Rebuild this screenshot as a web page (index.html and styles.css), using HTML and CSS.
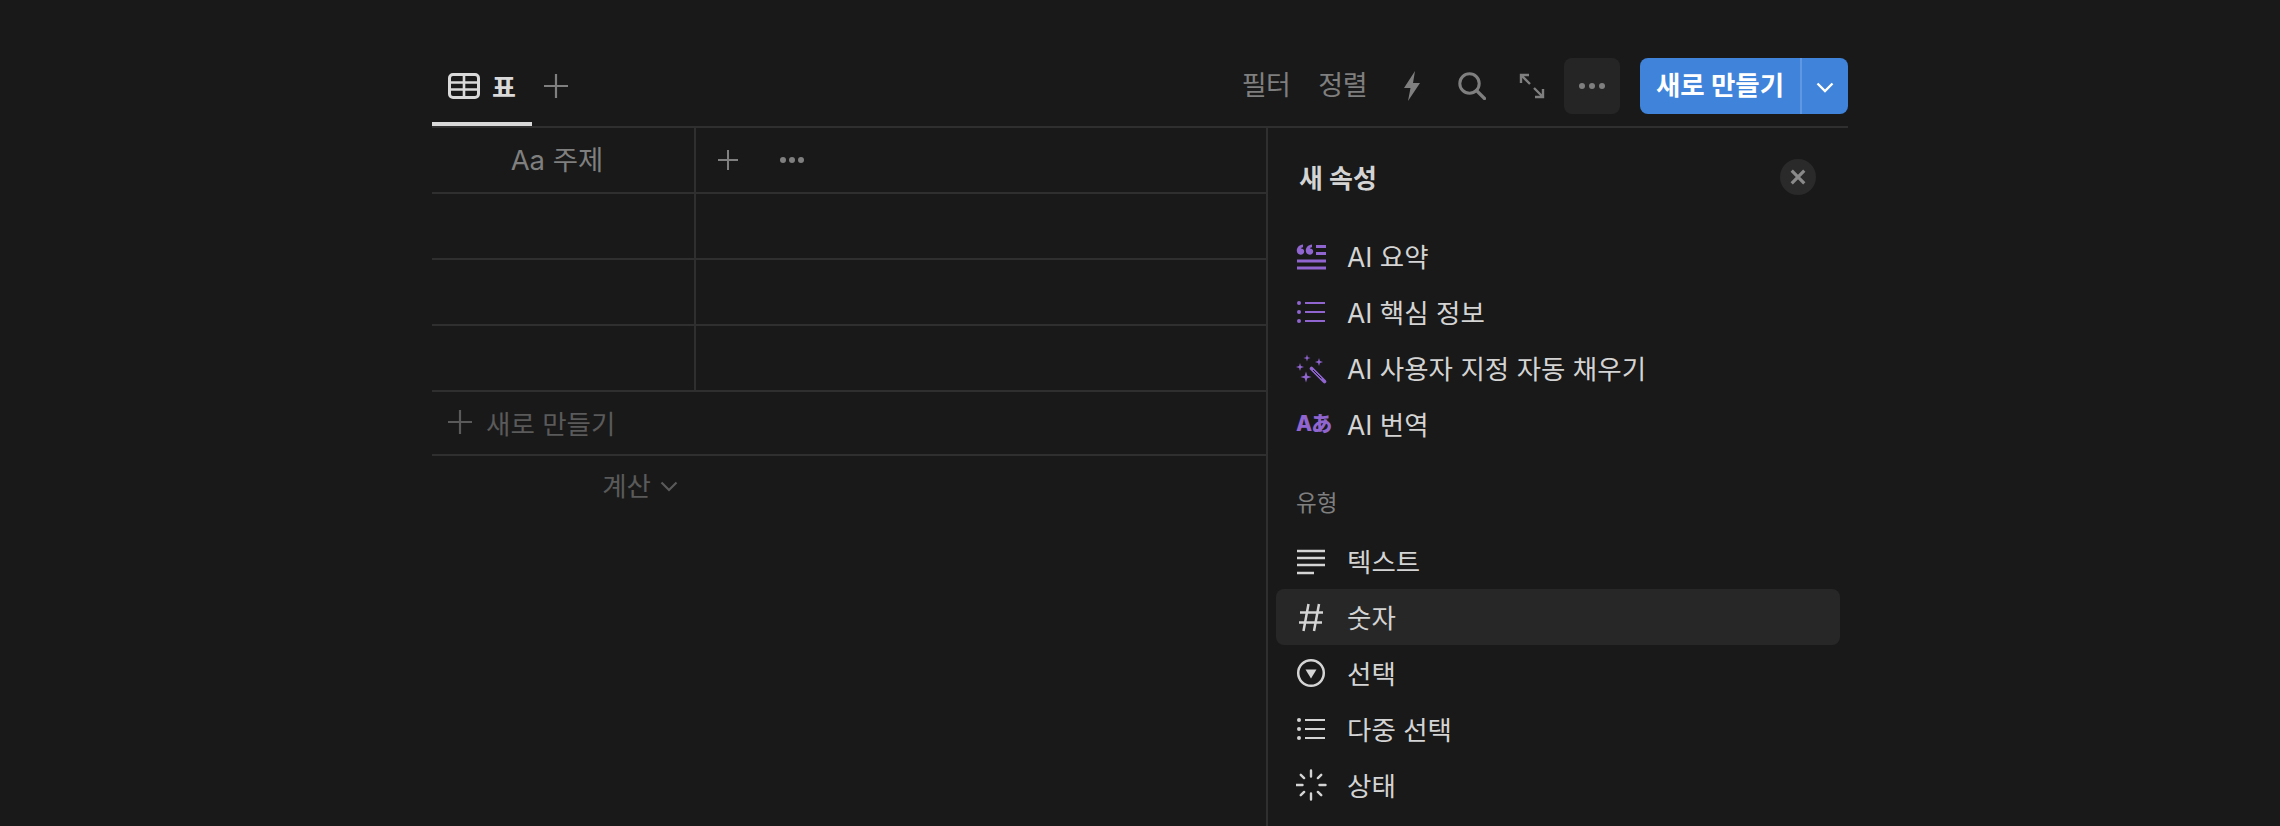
FILE: index.html
```html
<!DOCTYPE html>
<html lang="ko">
<head>
<meta charset="utf-8">
<title>표</title>
<link rel="stylesheet" href="styles.css">
</head>
<body>
<main class="db">
  <header class="topbar">
    <div class="tabs">
      <div class="tab">
        <svg class="ico-tab" viewBox="0 0 32 26"><rect x="1.500" y="1.500" width="29" height="23" rx="3.500" fill="none" stroke="currentColor" stroke-width="3"/><path d="M2 9.500h28M2 16.500h28M16 2v22" fill="none" stroke="currentColor" stroke-width="2.600"/></svg>
        <span>표</span>
      </div>
      <svg class="ico-add" viewBox="0 0 24 24"><path d="M12 0v24M0 12h24" stroke="currentColor" stroke-width="2.200"/></svg>
    </div>
    <div class="tools">
      <span class="tool-text">필터</span>
      <span class="tool-text">정렬</span>
      <svg class="ico-bolt" viewBox="0 0 20 30"><path d="M13 0 2 17h6.500L6 30l12-18h-7z" fill="currentColor"/></svg>
      <svg class="ico-search" viewBox="0 0 28 28"><circle cx="11.500" cy="11.500" r="9.700" fill="none" stroke="currentColor" stroke-width="3"/><path d="m18.500 18.500 8 8" stroke="currentColor" stroke-width="3.200" stroke-linecap="round"/></svg>
      <svg class="ico-expand" viewBox="0 0 26 26"><path d="M2 10V2h8M2 2l9 9M24 16v8h-8M24 24l-9-9" fill="none" stroke="currentColor" stroke-width="2.400"/></svg>
      <div class="more-btn"><i></i><i></i><i></i></div>
      <div class="new-btn">
        <span class="new-label">새로 만들기</span>
        <span class="new-caret"><svg viewBox="0 0 18 11"><path d="m1.500 1.500 7.500 7.500 7.500-7.500" fill="none" stroke="currentColor" stroke-width="2.400"/></svg></span>
      </div>
    </div>
  </header>
  <div class="content">
    <section class="table">
      <div class="row row-head">
        <div class="cell-first head-title">Aa 주제</div>
        <div class="cell-rest head-tools">
          <svg class="ico-head-add" viewBox="0 0 20 20"><path d="M10 0v20M0 10h20" stroke="currentColor" stroke-width="2"/></svg>
          <div class="dots"><i></i><i></i><i></i></div>
        </div>
      </div>
      <div class="row"><div class="cell-first"></div><div class="cell-rest"></div></div>
      <div class="row"><div class="cell-first"></div><div class="cell-rest"></div></div>
      <div class="row"><div class="cell-first"></div><div class="cell-rest"></div></div>
      <div class="add-row">
        <svg class="ico-row-add" viewBox="0 0 24 24"><path d="M12 0v24M0 12h24" stroke="currentColor" stroke-width="2.200"/></svg>
        <span>새로 만들기</span>
      </div>
      <div class="calc">
        <span>계산</span>
        <svg viewBox="0 0 18 11"><path d="m1.500 1.500 7.500 7.500 7.500-7.500" fill="none" stroke="currentColor" stroke-width="2.200"/></svg>
      </div>
    </section>
    <aside class="panel">
      <div class="panel-head">
        <h2>새 속성</h2>
        <div class="close"><svg viewBox="0 0 14 14"><path d="m1.500 1.500 11 11M12.500 1.500l-11 11" stroke="currentColor" stroke-width="2.800"/></svg></div>
      </div>
      <ul class="list list-ai">
        <li class="item">
          <svg class="ico" viewBox="0 0 32 32"><path id="q" d="M.8 10.800C.8 7.500 3 5 7 4.500v2.700C5.500 7.500 5 8 4.800 8.500c1.900-.1 3.400 1.200 3.400 3s-1.500 3.200-3.500 3.200c-2.400 0-3.900-1.700-3.900-3.900Z" fill="#9065d0"/><path d="M9.800 10.800C9.800 7.500 12 5 16 4.500v2.700C14.500 7.500 14 8 13.800 8.500c1.900-.1 3.400 1.200 3.400 3s-1.500 3.200-3.500 3.200c-2.400 0-3.900-1.700-3.900-3.900Z" fill="#9065d0"/><path d="M20 6.500h10M20 13.500h10M1 21h29M1 28h29" stroke="#9065d0" stroke-width="2.800"/></svg>
          <span>AI 요약</span>
        </li>
        <li class="item">
          <svg class="ico" viewBox="0 0 32 32"><circle cx="3" cy="7" r="2" fill="#9065d0"/><circle cx="3" cy="16" r="2" fill="#9065d0"/><circle cx="3" cy="25" r="2" fill="#9065d0"/><path d="M9 7h20M9 16h20M9 25h20" stroke="#9065d0" stroke-width="2.200"/></svg>
          <span>AI 핵심 정보</span>
        </li>
        <li class="item">
          <svg class="ico" viewBox="0 0 32 32"><path d="m11 2.500.8 2.700 2.700.8-2.700.8-.8 2.700-.8-2.700L7.500 6l2.700-.8zM23 6l.9 3.100L27 10l-3.100.9L23 14l-.9-3.100L19 10l3.100-.9zM4 11l.9 3.100L8 15l-3.100.9L4 19l-.9-3.100L0 15l3.100-.9zM10 19.500l1.300 4.200 4.200 1.300-4.200 1.300-1.300 4.200-1.300-4.200L4.500 25l4.200-1.300z" fill="#9065d0"/><path d="m15.500 16.500 13 13" stroke="#9065d0" stroke-width="3.600" stroke-linecap="round"/><path d="m17 18 8.500 8.500" stroke="#191919" stroke-width="1"/></svg>
          <span>AI 사용자 지정 자동 채우기</span>
        </li>
        <li class="item">
          <span class="ico ico-trans">Aあ</span>
          <span>AI 번역</span>
        </li>
      </ul>
      <div class="section-label">유형</div>
      <ul class="list">
        <li class="item">
          <svg class="ico" viewBox="0 0 32 32"><path d="M1 6h28M1 13h28M1 20h28M1 28h17" stroke="#d4d4d4" stroke-width="2.500"/></svg>
          <span>텍스트</span>
        </li>
        <li class="item item-active">
          <svg class="ico" viewBox="0 0 32 32"><path d="M12.500 3 7.500 30M23 3l-5 27M4 11.500h23M3 21.500h23" fill="none" stroke="#d4d4d4" stroke-width="2.500"/></svg>
          <span>숫자</span>
        </li>
        <li class="item">
          <svg class="ico" viewBox="0 0 32 32"><circle cx="15" cy="16" r="12.800" fill="none" stroke="#d4d4d4" stroke-width="2.500"/><path d="M9.500 12.500h11L15 21.500z" fill="#d4d4d4"/></svg>
          <span>선택</span>
        </li>
        <li class="item">
          <svg class="ico" viewBox="0 0 32 32"><circle cx="3" cy="7" r="2" fill="#d4d4d4"/><circle cx="3" cy="16" r="2" fill="#d4d4d4"/><circle cx="3" cy="25" r="2" fill="#d4d4d4"/><path d="M9 7h20M9 16h20M9 25h20" stroke="#d4d4d4" stroke-width="2.200"/></svg>
          <span>다중 선택</span>
        </li>
        <li class="item">
          <svg class="ico" viewBox="0 0 32 32"><path d="M15 1.500v6M15 24.500v6M.500 16h6M23.500 16h6M4.800 5.800l3.300 3.300M21.900 22.900l3.300 3.300M25.200 5.800l-3.300 3.300M8.100 22.900l-3.300 3.300" fill="none" stroke="#d4d4d4" stroke-width="2.400" stroke-linecap="round"/></svg>
          <span>상태</span>
        </li>
      </ul>
    </aside>
  </div>
</main>
</body>
</html>
```

FILE: styles.css
```css
* { box-sizing: border-box; }
html, body { margin: 0; height: 100%; }
body {
  background: #191919;
  color: #d4d4d4;
  font-family: Inter, "Noto Sans CJK KR", "Noto Sans", sans-serif;
  overflow: hidden;
}
.db { width: 1416px; margin: 0 auto; padding-top: 58px; }

/* top bar */
.topbar {
  display: flex;
  justify-content: space-between;
  height: 70px;
  border-bottom: 2px solid #2f2f2f;
}
.tabs { display: flex; align-items: flex-start; }
.tab {
  width: 100px;
  height: 68px;
  display: flex;
  align-items: center;
  justify-content: center;
  gap: 12px;
  padding-bottom: 9px;
  border-bottom: 4px solid #d9d9d9;
  font-size: 26px;
  font-weight: 700;
  color: #d9d9d9;
}
.ico-tab { width: 32px; height: 26px; }
.ico-add { width: 24px; height: 24px; margin: 16px 0 0 12px; color: #7f7f7f; }
.tools { display: flex; align-items: flex-start; color: #7f7f7f; }
.tool-text { font-size: 27px; line-height: 56px; margin-right: 28px; letter-spacing: -0.5px; }
.ico-bolt { width: 20px; height: 30px; margin: 13px 36px 0 7px; }
.ico-search { width: 28px; height: 28px; margin: 14px 33px 0 0; }
.ico-expand { width: 26px; height: 26px; margin: 15px 19px 0 0; }
.more-btn {
  width: 56px;
  height: 56px;
  border-radius: 8px;
  background: #252525;
  display: flex;
  align-items: center;
  justify-content: center;
  gap: 4px;
  margin-right: 20px;
}
.more-btn i, .dots i { display: block; width: 6px; height: 6px; border-radius: 50%; background: #7f7f7f; }
.new-btn {
  width: 208px;
  height: 56px;
  border-radius: 8px;
  background: #3f83db;
  color: #fff;
  display: flex;
}
.new-label {
  width: 162px;
  border-right: 2px solid #5f97e2;
  font-size: 26.500px;
  font-weight: 700;
  line-height: 54px;
  text-align: center;
}
.new-caret { flex: 1; display: flex; align-items: center; justify-content: center; }
.new-caret svg { width: 18px; height: 11px; margin-top: 3px; }

/* table */
.content { display: flex; }
.table { width: 834px; }
.row { display: flex; height: 66px; border-bottom: 2px solid #2f2f2f; }
.row-head { height: 66px; }
.cell-first { width: 264px; border-right: 2px solid #2f2f2f; }
.cell-rest { flex: 1; }
.head-title {
  font-size: 27.500px;
  line-height: 64px;
  color: #7f7f7f;
  text-align: center;
  padding-right: 12px;
}
.head-tools { display: flex; align-items: center; gap: 42px; padding-left: 22px; color: #7f7f7f; }
.ico-head-add { width: 20px; height: 20px; }
.dots { display: flex; gap: 3px; }
.add-row {
  height: 64px;
  border-bottom: 2px solid #2f2f2f;
  display: flex;
  align-items: center;
  gap: 14px;
  padding-left: 16px;
  padding-bottom: 2px;
  color: #5a5a5a;
  font-size: 26.500px;
}
.ico-row-add { width: 24px; height: 24px; }
.calc {
  width: 246px;
  height: 56px;
  display: flex;
  align-items: center;
  justify-content: flex-end;
  gap: 9px;
  font-size: 26.500px;
  color: #5a5a5a;
}
.calc svg { width: 18px; height: 11px; margin-top: 4px; }

/* panel */
.panel {
  flex: 1;
  height: 698px;
  border-left: 2px solid #2f2f2f;
  padding: 15px 8px 0;
}
.panel-head {
  display: flex;
  align-items: center;
  justify-content: space-between;
  height: 68px;
  padding: 0 24px 0 23px;
}
.panel-head h2 { margin: 0; padding-bottom: 2px; font-size: 26px; font-weight: 700; color: #d4d4d4; }
.close {
  width: 36px;
  height: 36px;
  border-radius: 50%;
  background: #2a2a2a;
  color: #8a8a8a;
  display: flex;
  align-items: center;
  justify-content: center;
}
.close svg { width: 16px; height: 16px; }
.list { list-style: none; margin: 0; padding: 0; }
.list-ai { margin-top: 17px; }
.item {
  height: 56px;
  display: flex;
  align-items: center;
  gap: 19px;
  padding-left: 20px;
  border-radius: 8px;
  font-size: 26.500px;
  color: #d4d4d4;
}
.item > span:last-child { padding-bottom: 2px; }
.item-active { background: #272727; }
.ico { width: 32px; height: 32px; flex: none; }
.ico-trans { color: #9065d0; font-size: 21px; font-weight: 800; line-height: 32px; white-space: nowrap; letter-spacing: -1px; }
.section-label {
  height: 55px;
  margin-top: 26px;
  padding-left: 20px;
  font-size: 22.500px;
  line-height: 50px;
  color: #7f7f7f;
}
```
